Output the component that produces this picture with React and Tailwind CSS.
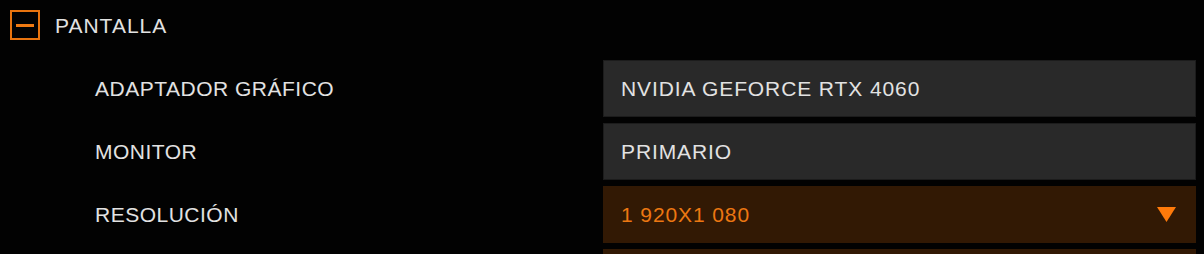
export default function App() {
  const rows = [
    { label: "ADAPTADOR GRÁFICO", value: "NVIDIA GEFORCE RTX 4060" },
    { label: "MONITOR", value: "PRIMARIO" },
    { label: "RESOLUCIÓN", value: "1 920X1 080", active: true },
    { label: "", value: "", active: true },
  ];

  return (
    <div
      className="w-[1204px] h-[254px] overflow-hidden bg-[#020202] text-[21px] tracking-[0.5px] text-[#e2e2e2]"
      style={{ fontFamily: '"Liberation Sans", Arial, sans-serif' }}
    >
      {/* Section header */}
      <div className="flex items-center pl-[10px] pt-[10px] h-[40px]">
        <button className="w-[30px] h-[30px] border-2 border-[#e8740f] flex items-center justify-center">
          <span className="block w-[18px] h-[3px] bg-[#f07a12]" />
        </button>
        <span className="ml-[15px] leading-none tracking-[1px]">PANTALLA</span>
      </div>

      {/* Settings rows */}
      <div className="mt-[20px] flex flex-col gap-[6px]">
        {rows.map((row, i) => (
          <div key={i} className="flex items-center">
            <div className="flex-1 pl-[95px] leading-none">{row.label}</div>
            <div
              className={
                row.active
                  ? "mr-[8px] w-[593px] h-[57px] flex items-center justify-between pl-[18px] pr-[20px] bg-[#321904] text-[#ec7712]"
                  : "mr-[8px] w-[593px] h-[57px] flex items-center pl-[17px] bg-[#292929] border border-[#1c1c1c]"
              }
            >
              <span className="leading-none tracking-[0.9px]">{row.value}</span>
              {row.active && row.value && (
                <svg width="19" height="15" viewBox="0 0 19 15">
                  <polygon points="0,0 19,0 9.5,15" fill="#ff7a0a" />
                </svg>
              )}
            </div>
          </div>
        ))}
      </div>
    </div>
  );
}
